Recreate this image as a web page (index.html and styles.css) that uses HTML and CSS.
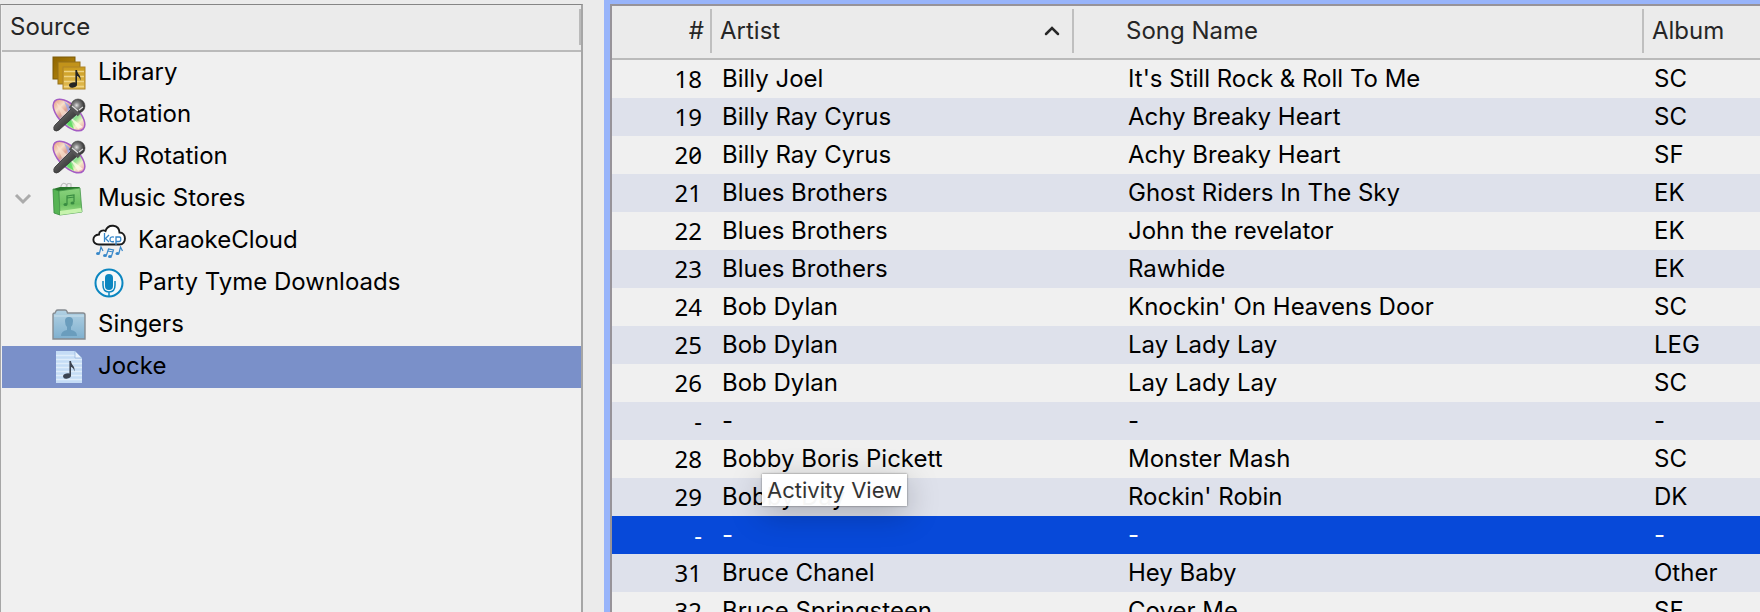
FILE: index.html
```html
<!DOCTYPE html>
<html lang="en">
<head>
    <meta charset="UTF-8">
    <meta name="viewport" content="width=device-width, initial-scale=1.0">
    <title>Karaoke Library</title>
    <link rel="stylesheet" href="styles.css">
</head>
<body>
    <!-- Shared drawings -->
    <svg class="defs" aria-hidden="true">
        <defs>
            <linearGradient id="goldDark" x1="0" y1="0" x2="1" y2="1">
                <stop offset="0" stop-color="#8f6500"/>
                <stop offset="1" stop-color="#b98a10"/>
            </linearGradient>
            <linearGradient id="goldLight" x1="0" y1="0" x2="0" y2="1">
                <stop offset="0" stop-color="#c99a1c"/>
                <stop offset="1" stop-color="#e3bd55"/>
            </linearGradient>
            <linearGradient id="disc" x1="0" y1="0" x2="1" y2="0">
                <stop offset="0" stop-color="#e9a58c"/>
                <stop offset="0.2" stop-color="#f6dfc9"/>
                <stop offset="0.35" stop-color="#dfa08f"/>
                <stop offset="0.5" stop-color="#a9c7f2"/>
                <stop offset="0.68" stop-color="#8fe08a"/>
                <stop offset="0.82" stop-color="#f3efc8"/>
                <stop offset="1" stop-color="#eda0b0"/>
            </linearGradient>
            <linearGradient id="handle" x1="0" y1="0" x2="1" y2="1">
                <stop offset="0" stop-color="#8b8b8b"/>
                <stop offset="0.5" stop-color="#4b4b4b"/>
                <stop offset="1" stop-color="#1c1c1c"/>
            </linearGradient>
            <radialGradient id="micHead" cx="0.4" cy="0.45" r="0.6">
                <stop offset="0" stop-color="#e2e2e2"/>
                <stop offset="0.35" stop-color="#858585"/>
                <stop offset="1" stop-color="#282828"/>
            </radialGradient>
            <linearGradient id="bag" x1="0" y1="0" x2="0" y2="1">
                <stop offset="0" stop-color="#8ad37e"/>
                <stop offset="0.6" stop-color="#6cc062"/>
                <stop offset="1" stop-color="#a2e48c"/>
            </linearGradient>
            <linearGradient id="folder" x1="0" y1="0" x2="0" y2="1">
                <stop offset="0" stop-color="#b2d1e3"/>
                <stop offset="1" stop-color="#7fb0cf"/>
            </linearGradient>
            <g id="note">
                <ellipse cx="4" cy="15" rx="4" ry="2.6" transform="rotate(-12 4 15)"/>
                <path d="M6.4 0H8C8 4 12.500 5 11.400 10.500C10.800 7.500 9.500 6.300 8 6V15H6.400Z"/>
            </g>
        </defs>
        <symbol id="icon-rotation" viewBox="0 0 34 34">
            <ellipse cx="17" cy="17" rx="20" ry="10" transform="rotate(45 17 17)" fill="url(#disc)" stroke="#a45cc4" stroke-width="1.500"/>
            <path d="M4 4L15 15L10 18Z" fill="#f9e3d0" opacity="0.700"/>
            <path d="M12 3L17 15L20 10Z" fill="#8aa4f5" opacity="0.700"/>
            <path d="M17 18L31 29L26 31Z" fill="#fffbe8" opacity="0.800"/>
            <path d="M17 18L22 31L15 26Z" fill="#55dc59" opacity="0.800"/>
            <path d="M19 11L25 16L7 32Q4 34 2 32Q1 29 3 27Z" fill="url(#handle)" stroke="#333" stroke-width="0.800"/>
            <circle cx="26" cy="8" r="7" fill="url(#micHead)" stroke="#444" stroke-width="0.600"/>
            <path d="M18 8L27 17" stroke="#555" stroke-width="3.500"/>
            <path d="M20 8L26 13M27 12L31 9" stroke="#ddd" stroke-width="1.200"/>
        </symbol>
    </svg>

    <div class="window">
        <nav class="sidebar" aria-label="Source">
            <div class="sidebar-header"><h2>Source</h2></div>
            <ul class="source-list">
                <li><a class="source" href="#library">
                    <svg class="icon" viewBox="0 0 34 34" aria-hidden="true">
                        <rect x="1" y="1" width="22" height="22" fill="url(#goldDark)" stroke="#7d5a08"/>
                        <rect x="6" y="6" width="22" height="22" fill="#c2931a" stroke="#94701b"/>
                        <rect x="11" y="11" width="22" height="22" fill="url(#goldLight)" stroke="#ae8429"/>
                        <path d="M12 15.500H32M12 20.500H32M12 25.500H32M12 30.500H32" stroke="#efd485" stroke-width="1.500"/>
                        <use href="#note" x="17" y="14" fill="#242424"/>
                    </svg>
                    <span>Library</span></a></li>
                <li><a class="source" href="#rotation"><svg class="icon" aria-hidden="true"><use href="#icon-rotation"/></svg><span>Rotation</span></a></li>
                <li><a class="source" href="#kj-rotation"><svg class="icon" aria-hidden="true"><use href="#icon-rotation"/></svg><span>KJ Rotation</span></a></li>
                <li class="group">
                    <button class="toggle" type="button" aria-label="Collapse Music Stores" aria-expanded="true">
                        <svg width="18" height="12" viewBox="0 0 18 12"><path d="M2 2L9 9L16 2" fill="none" stroke="#ababab" stroke-width="3"/></svg>
                    </button>
                    <a class="source" href="#stores">
                        <svg class="icon" viewBox="0 0 34 34" aria-hidden="true">
                            <path d="M9 8V4Q11 -1 15 3V8M14 5Q15 0 19 2V8" fill="none" stroke="#bcbcbc" stroke-width="1.100"/>
                            <path d="M1 7L8 5H28L25 9L7 10Z" fill="#28752b"/>
                            <path d="M1 7L7 9L8 33L2 31Z" fill="#57b455" stroke="#368b3b" stroke-width="0.800"/>
                            <path d="M7 9L28 6L30 30L8 33Z" fill="url(#bag)" stroke="#45984a" stroke-width="0.800"/>
                            <path d="M8 29L29 26L30 30L8 33Z" fill="#c7f3ad"/>
                            <path d="M15 22V14L22 13V20M15 16L22 15" fill="none" stroke="#398c42" stroke-width="1.200"/>
                            <ellipse cx="13.500" cy="22.500" rx="2" ry="1.500" fill="#398c42"/>
                            <ellipse cx="20.500" cy="21" rx="2" ry="1.500" fill="#398c42"/>
                        </svg>
                        <span>Music Stores</span></a>
                    <ul class="source-list nested">
                        <li><a class="source" href="#karaokecloud">
                            <svg class="icon" viewBox="0 0 34 34" aria-hidden="true">
                                <path d="M7 20.500C-0.500 20.500 -0.500 11 7 10.500C7 7 11 5.500 13.500 7C16 -0.500 27 0 27.500 8.500C34.500 8.500 35 20.500 27.500 20.500Z" fill="#fff" stroke="#1b1b1b" stroke-width="1.900"/>
                                <path d="M12.500 9V18M17 11L13.500 14.500L17 18M22 13.200Q18 12.200 18 15.500Q18 18.500 22 17.500M24 21V13H27.500Q28.800 13 28.800 15.200Q28.800 17.500 27 17.500H24" fill="none" stroke="#3787c9" stroke-width="1.300"/>
                                <g fill="#3787c9">
                                    <ellipse cx="6" cy="29.500" rx="2" ry="1.500"/>
                                    <ellipse cx="13" cy="31.500" rx="2" ry="1.500"/>
                                    <ellipse cx="18" cy="32.500" rx="2" ry="1.500"/>
                                    <ellipse cx="25.500" cy="29.500" rx="2" ry="1.500"/>
                                </g>
                                <path d="M7.500 29L9 23L11 27M14.500 31L16.500 25L21.500 26L19.500 32M16 27L21 28M27 29L28.500 23L30.500 27" fill="none" stroke="#3787c9" stroke-width="1.200"/>
                            </svg>
                            <span>KaraokeCloud</span></a></li>
                        <li><a class="source" href="#partytyme">
                            <svg class="icon" viewBox="0 0 34 34" aria-hidden="true">
                                <circle cx="17" cy="17" r="13.500" fill="#f3f8fa" stroke="#0b86c0" stroke-width="2"/>
                                <rect x="13" y="8" width="8" height="16" rx="4" fill="#0b86c0"/>
                                <path d="M11 15V19Q11 26 17 26Q23 26 23 19V15M17 26V30" fill="none" stroke="#0b86c0" stroke-width="1.500"/>
                            </svg>
                            <span>Party Tyme Downloads</span></a></li>
                    </ul>
                </li>
                <li><a class="source" href="#singers">
                    <svg class="icon" viewBox="0 0 34 34" aria-hidden="true">
                        <path d="M1 31V6Q1 5 3 5L4 3Q4.500 2 6 2H13Q14.500 2 15 3.500L15.500 5H31Q33 5 33 7V31Z" fill="url(#folder)" stroke="#858b90" stroke-width="1.400"/>
                        <path d="M2 8H32" stroke="#cbe0eb"/>
                        <path d="M9 28Q9 23 15 22V19Q13 17 13 13Q13 9 17 9Q21 9 21 13Q21 17 19 19V22Q25 23 25 28Z" fill="#6a9dbd"/>
                    </svg>
                    <span>Singers</span></a></li>
                <li><a class="source selected" href="#jocke" aria-current="true">
                    <svg class="icon" viewBox="0 0 34 34" aria-hidden="true">
                        <path d="M4 1H23L30 8V33H4Z" fill="#c5dcf6"/>
                        <path d="M4 5.500H23M4 9.500H30M4 13.500H30M4 17.500H30M4 21.500H30M4 25.500H30M4 29.500H30" stroke="#e0edfb" stroke-width="1.500"/>
                        <path d="M23 1L30 8H23Z" fill="#e8f2fd" stroke="#8fb0d9" stroke-width="0.700"/>
                        <use href="#note" x="11" y="11" fill="#3c4452"/>
                    </svg>
                    <span>Jocke</span></a></li>
            </ul>
        </nav>

        <main class="songs">
            <table class="song-table">
                <colgroup>
                    <col class="col-num">
                    <col class="col-artist">
                    <col class="col-song">
                    <col class="col-album">
                </colgroup>
                <thead>
                    <tr>
                        <th class="num" scope="col"><div class="head">#</div></th>
                        <th scope="col" aria-sort="ascending">
                            <div class="head">Artist
                                <svg width="16" height="11" viewBox="0 0 16 11" aria-hidden="true"><path d="M2 9L8 3L14 9" fill="none" stroke="#272727" stroke-width="2.500" stroke-linecap="round"/></svg>
                            </div>
                        </th>
                        <th class="song" scope="col"><div class="head">Song Name</div></th>
                        <th scope="col"><div class="head">Album</div></th>
                    </tr>
                </thead>
                <tbody>
                    <tr><td class="num">18</td><td>Billy Joel</td><td class="song">It's Still Rock &amp; Roll To Me</td><td>SC</td></tr>
                    <tr><td class="num">19</td><td>Billy Ray Cyrus</td><td class="song">Achy Breaky Heart</td><td>SC</td></tr>
                    <tr><td class="num">20</td><td>Billy Ray Cyrus</td><td class="song">Achy Breaky Heart</td><td>SF</td></tr>
                    <tr><td class="num">21</td><td>Blues Brothers</td><td class="song">Ghost Riders In The Sky</td><td>EK</td></tr>
                    <tr><td class="num">22</td><td>Blues Brothers</td><td class="song">John the revelator</td><td>EK</td></tr>
                    <tr><td class="num">23</td><td>Blues Brothers</td><td class="song">Rawhide</td><td>EK</td></tr>
                    <tr><td class="num">24</td><td>Bob Dylan</td><td class="song">Knockin' On Heavens Door</td><td>SC</td></tr>
                    <tr><td class="num">25</td><td>Bob Dylan</td><td class="song">Lay Lady Lay</td><td>LEG</td></tr>
                    <tr><td class="num">26</td><td>Bob Dylan</td><td class="song">Lay Lady Lay</td><td>SC</td></tr>
                    <tr><td class="num">-</td><td>-</td><td class="song">-</td><td>-</td></tr>
                    <tr><td class="num">28</td><td>Bobby Boris Pickett</td><td class="song">Monster Mash</td><td>SC</td></tr>
                    <tr><td class="num">29</td><td class="hovered">Bobby Day<span class="tooltip" role="tooltip">Activity View</span></td><td class="song">Rockin' Robin</td><td>DK</td></tr>
                    <tr class="selected"><td class="num">-</td><td>-</td><td class="song">-</td><td>-</td></tr>
                    <tr><td class="num">31</td><td>Bruce Chanel</td><td class="song">Hey Baby</td><td>Other</td></tr>
                    <tr><td class="num">32</td><td>Bruce Springsteen</td><td class="song">Cover Me</td><td>SF</td></tr>
                </tbody>
            </table>
        </main>
    </div>
</body>
</html>
```
FILE: styles.css
```css
* {
    box-sizing: border-box;
}
body {
    margin: 0;
    background: #ebebeb;
    color: #000;
    font-family: Inter, "Liberation Sans", sans-serif;
    font-size: 24px;
}
.defs {
    position: absolute;
    width: 0;
    height: 0;
}
.window {
    display: grid;
    grid-template-columns: 583px 1fr;
    column-gap: 21px;
    height: 100vh;
    overflow: hidden;
}

/* Source list */
.sidebar {
    margin-top: 4px;
    padding-left: 1px;
    background: #f0f0f0;
    border: 1px solid #a6a6a6;
    border-top-color: #858585;
    border-right-width: 2px;
    border-bottom: none;
}
.sidebar-header {
    height: 47px;
    padding-top: 4px;
    background: #ebebeb;
    border-bottom: 2px solid #bababa;
}
.sidebar-header h2 {
    margin: 0;
    padding-left: 8px;
    border-right: 2px solid #bababa;
    color: #262626;
    font-size: 24px;
    font-weight: 400;
    line-height: 36px;
}
.source-list {
    margin: 0;
    padding: 0;
    list-style: none;
}
.source {
    display: flex;
    align-items: center;
    gap: 12px;
    height: 42px;
    padding-left: 50px;
    color: #000;
    line-height: 40px;
    text-decoration: none;
}
.source span {
    padding-bottom: 2px;
}
.nested .source {
    padding-left: 90px;
}
.source.selected {
    background: #7a90c9;
}
.icon {
    width: 34px;
    height: 34px;
    flex: none;
}
.group {
    position: relative;
}
.toggle {
    position: absolute;
    top: 0;
    left: 12px;
    display: flex;
    align-items: center;
    height: 42px;
    padding: 0;
    border: none;
    background: none;
}

/* Song table */
.songs {
    min-width: 0;
    overflow: hidden;
    border-top: 4px solid #98b4fa;
    border-left: 6px solid #98b4fa;
}
.song-table {
    width: 100%;
    table-layout: fixed;
    border-collapse: separate;
    border-spacing: 0;
    border-top: 2px solid #979399;
    border-left: 2px solid #979399;
    background: #f0f0f0;
}
.col-num {
    width: 100px;
}
.col-artist {
    width: 362px;
}
.col-song {
    width: 570px;
}
th {
    height: 54px;
    padding: 3px 0 5px;
    background: #ebebeb;
    border-bottom: 2px solid #bababa;
    color: #262626;
    font-weight: 400;
    text-align: left;
}
.head {
    display: flex;
    align-items: center;
    justify-content: space-between;
    height: 44px;
    padding: 0 12px 2px 8px;
    border-right: 2px solid #bfbfbf;
}
th:last-child .head {
    border-right: none;
}
th.num .head {
    justify-content: flex-end;
    padding-right: 6px;
}
th.song .head {
    padding-left: 52px;
}
td {
    height: 38px;
    padding: 0 0 0 10px;
    line-height: 38px;
    white-space: nowrap;
}
td.num {
    padding-right: 10px;
    font-family: "Noto Sans", Inter, sans-serif;
    font-feature-settings: "tnum", "zero";
    text-align: right;
}
td.song {
    padding-left: 54px;
}
tbody tr:nth-child(even) {
    background: #dee1eb;
}
tbody tr.selected {
    background: #0749d9;
    color: #fff;
}
.hovered {
    position: relative;
}
.tooltip {
    position: absolute;
    top: -4px;
    left: 50px;
    height: 32px;
    padding: 0 5px;
    background: rgba(255, 255, 255, 0.96);
    box-shadow: 0 0 2px rgba(0, 0, 0, 0.5), 0 8px 32px rgba(0, 0, 0, 0.25);
    color: #333;
    font-size: 22px;
    line-height: 32px;
}
```
